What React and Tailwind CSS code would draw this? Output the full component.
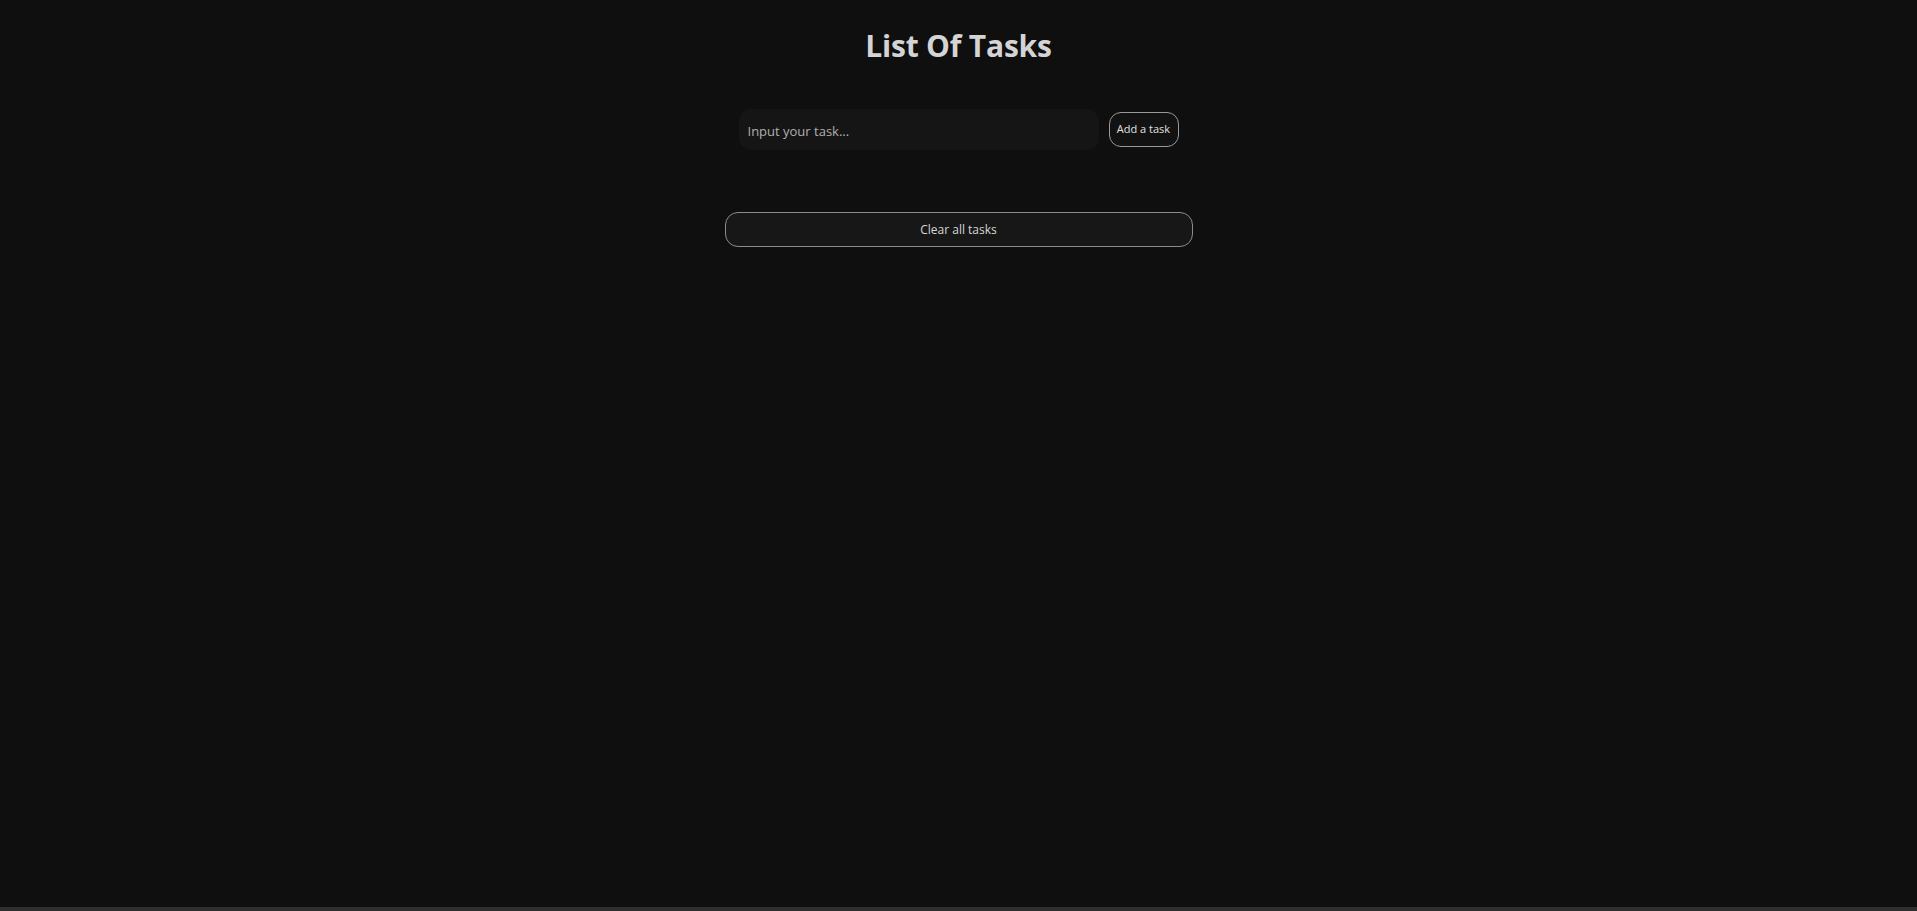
import React, { useState } from 'react'

export default function App() {
  const [task, setTask] = useState('')
  const [tasks, setTasks] = useState([])

  const addTask = () => {
    if (!task.trim()) return
    setTasks([...tasks, task])
    setTask('')
  }

  return (
    <div className="min-h-screen h-[911px] bg-[#0f0f0f] text-[#d6d6d6] flex flex-col" style={{ fontFamily: '"Open Sans", "Noto Sans", sans-serif' }}>
      <div className="flex-1 flex flex-col items-center">
        {/* Title */}
        <h1 className="mt-[24px] text-[30px] leading-[44px] font-bold text-[#d4d4d4] tracking-[-0.2px]">
          List Of Tasks
        </h1>

        {/* Input row */}
        <div className="mt-[41px] flex items-center gap-[10px]">
          <input
            value={task}
            onChange={e => setTask(e.target.value)}
            placeholder="Input your task..."
            className="w-[360px] h-[41px] rounded-[12px] bg-[#151515] px-[9px] pt-[2px] text-[13px] text-[#cfcfcf] placeholder:text-[#b0b0b0] outline-none"
          />
          <button
            onClick={addTask}
            className="w-[70px] h-[35px] rounded-[12px] border border-[#9a9a9a] bg-[#121212] text-[11px] text-[#e0e0e0]"
          >
            Add a task
          </button>
        </div>

        {/* Task list */}
        <ul className="w-[468px] mt-[20px] min-h-[42px]">
          {tasks.map((t, i) => (
            <li key={i} className="py-1 text-sm">{t}</li>
          ))}
        </ul>

        {/* Clear */}
        <button
          onClick={() => setTasks([])}
          className="w-[468px] h-[35px] rounded-[13px] border border-[#8c8c8c] bg-[#171717] text-[12px] text-[#d8d8d8]"
        >
          Clear all tasks
        </button>
      </div>
      <div className="h-[4px] bg-[#2e2e2e]" />
    </div>
  )
}
